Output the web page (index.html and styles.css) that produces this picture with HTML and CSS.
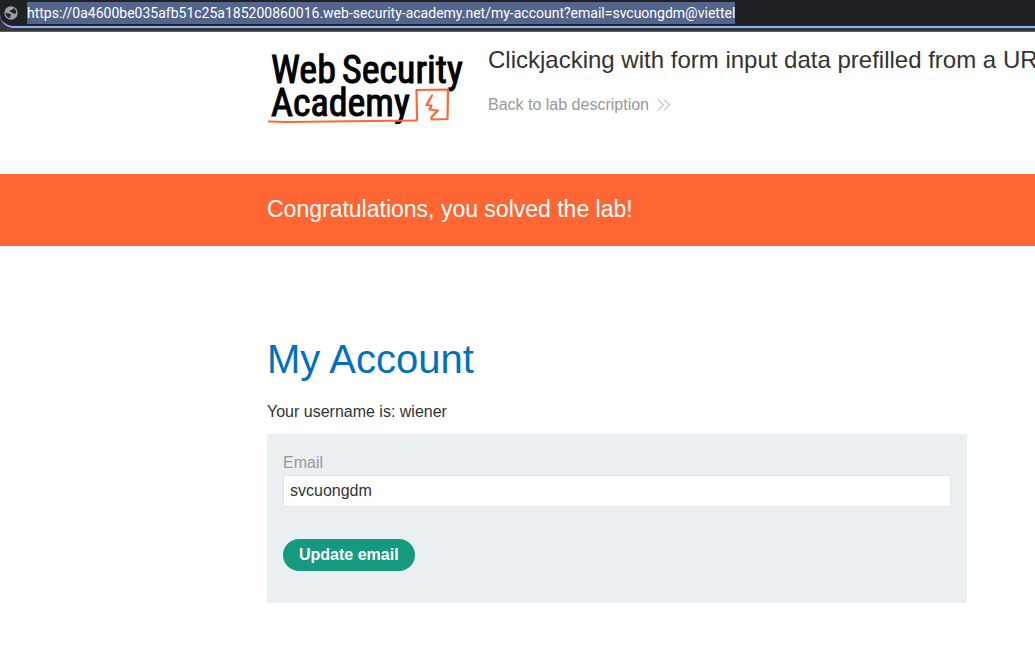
FILE: index.html
```
<!DOCTYPE html>
<html lang="en">
<head>
<meta charset="utf-8">
<title>Web Security Academy</title>
<link rel="stylesheet" href="styles.css">
</head>
<body>
<div class="toolbar">
  <div class="omnibox">
    <svg class="globe" viewBox="0 0 14 14" aria-hidden="true">
      <circle cx="7" cy="7" r="6.7" fill="#9aa0a6"/>
      <path d="M1.6 6.4 3 7.2 5.8 7.4 7 8.8 6.3 10.2 6.2 12.3A5.4 5.4 0 0 1 1.6 6.4ZM6.2 2 9 1.9 9.2 3 7.6 4 6 4.3 5.5 5.6 7.6 5.9 8.4 7.3 11.2 7.8 12.3 7A5.4 5.4 0 0 0 9 1.9Z" fill="#202124"/>
    </svg>
    <input class="url" type="text" aria-label="Address" value="https://0a4600be035afb51c25a185200860016.web-security-academy.net/my-account?email=svcuongdm@viettel">
  </div>
</div>
<header class="lab-header">
  <svg class="logo" viewBox="0 0 205 76" role="img" aria-label="Web Security Academy">
    <g class="logo-text">
      <text x="4" y="35">Web</text>
      <text x="75" y="35">Security</text>
      <text x="4" y="68">Academy</text>
    </g>
    <g fill="none" stroke="#ff6633" stroke-linejoin="round" stroke-linecap="round">
      <path d="M2 73.500 20 74 60 73.500 149 72.500" stroke-width="2"/>
      <path d="M150 72 149.500 42 181 41.500 180.500 71 164.500 71.500 164.500 69 171 62.500 162.500 61.500 164.500 57.500 159.500 57 165 47.500" stroke-width="2.200"/>
    </g>
  </svg>
  <div class="lab-title">
    <h2 class="lab-name">Clickjacking with form input data prefilled from a URL parameter</h2>
    <a class="back" href="#">Back to lab description
      <svg class="chevrons" viewBox="0 0 14 12" aria-hidden="true"><path d="M1 0.500 6.500 6 1 11.500M7 0.500 12.500 6 7 11.500" fill="none" stroke="#999" stroke-width="1"/></svg>
    </a>
  </div>
</header>
<section class="banner"><h4 class="banner-text">Congratulations, you solved the lab!</h4></section>
<main class="account">
  <h1 class="heading">My Account</h1>
  <p class="username">Your username is: wiener</p>
  <form class="panel">
    <label class="label" for="email">Email</label>
    <input class="field" id="email" type="email" value="svcuongdm">
    <button class="button" type="submit">Update email</button>
  </form>
</main>
</body>
</html>
```
FILE: styles.css
```
* { box-sizing: border-box; }
body {
  margin: 0;
  background: #fff;
  color: #333332;
  font: 16px/24px "Liberation Sans", Arial, sans-serif;
  overflow-x: hidden;
}
.toolbar {
  background: #35363a;
  border-bottom: 1px solid #5a5b5f;
  padding-bottom: 3px;
}
.omnibox {
  display: flex;
  align-items: center;
  gap: 9px;
  height: 28px;
  padding-left: 4px;
  background: #202124;
  border-bottom: 2px solid #8ab4f8;
  border-bottom-left-radius: 14px;
}
.globe { width: 14px; height: 14px; flex: none; }
.url {
  field-sizing: content;
  height: 22px;
  margin: 0;
  padding: 0;
  border: 0;
  background: #53658b;
  color: #fff;
  font: 14px/22px Roboto, sans-serif;
}
.lab-header {
  display: flex;
  gap: 16px;
  height: 142px;
  padding: 16px 0 0 267px;
}
.logo { width: 205px; height: 76px; flex: none; }
.logo-text {
  font: 38px "Liberation Sans Narrow", "Arial Narrow", "Roboto Condensed", sans-serif;
  fill: #000;
  stroke: #000;
  stroke-width: 1px;
}
.lab-title {
  position: relative;
  flex: 1;
  min-width: 0;
  overflow-x: clip;
  overflow-clip-margin: 20px;
  white-space: nowrap;
}
.lab-name {
  margin: 0 0 21px;
  font-size: 24px;
  font-weight: 400;
  line-height: 24px;
}
.lab-title::before {
  content: "";
  position: absolute;
  left: -17px;
  top: 6px;
  height: 62px;
  border-left: 1px solid #e0e0e0;
}
.back {
  display: flex;
  align-items: center;
  gap: 8px;
  color: #999;
  text-decoration: none;
}
.chevrons { width: 14px; height: 12px; }
.banner { padding: 19px 68px 21px 267px; background: #ff6633; }
.banner-text { margin: 0; color: #fff; font-size: 23px; font-weight: 400; line-height: 32px; }
.account { padding: 88px 68px 56px 267px; }
.heading { margin: 0 0 16px; color: #0071bc; font-size: 40px; font-weight: 400; line-height: 50px; }
.username { margin: 0 0 10px; }
.panel { padding: 17px 16px 32px; background: #eaeff2; }
.label { display: block; color: #999; }
.field {
  display: block;
  width: 100%;
  height: 32px;
  margin: 0 0 32px;
  padding: 0 6px;
  border: 1px solid #e2e4e5;
  background: #fff;
  color: #333332;
  font: inherit;
}
.button {
  display: block;
  height: 32px;
  padding: 0 16px;
  border: 0;
  border-radius: 16px;
  background: #159a80;
  color: #fff;
  font: bold 16px "Liberation Sans", Arial, sans-serif;
}
```
